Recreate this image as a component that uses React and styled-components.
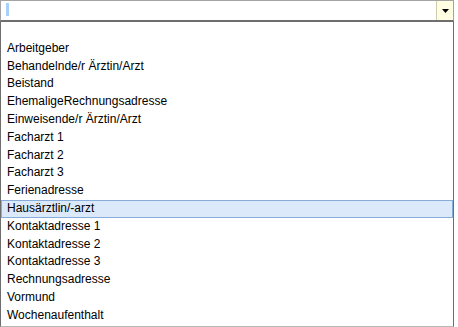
import styled, { createGlobalStyle } from "styled-components";

const GlobalStyle = createGlobalStyle`
  body {
    margin: 0;
    background: #ffffff;
    font-family: "Liberation Sans", Arial, sans-serif;
  }
`;

const Combo = styled.div`
  width: 454px;
  display: flex;
  flex-direction: column;
`;

const Field = styled.div`
  height: 19px;
  display: flex;
  border: 1px solid #a3a3a3;
  border-bottom-color: #6e6e6e;
`;

const Input = styled.div`
  flex: 1;
  position: relative;
`;

const Caret = styled.span`
  position: absolute;
  left: 5px;
  top: 2px;
  width: 3px;
  height: 13px;
  background: #a9d0f7;
`;

const DropButton = styled.div`
  width: 16px;
  display: flex;
  align-items: center;
  justify-content: center;
  background: #fffde2;
  border-left: 1px solid #cfcdb0;
`;

const List = styled.ul`
  list-style: none;
  margin: 0;
  padding: 0 0 1px 0;
  border: 1px solid #6e6e6e;
  border-bottom-color: #b8b8b8;
  font-size: 12px;
  color: #000000;
`;

const Item = styled.li`
  padding: 1px 5px;
  border: 1px solid ${({ $active }) => ($active ? "#86acdc" : "transparent")};
  background: ${({ $active }) => ($active ? "#dce9fb" : "transparent")};
  line-height: 13.8px;
  height: 13.8px;
  white-space: nowrap;
`;

const options = [
  "",
  "Arbeitgeber",
  "Behandelnde/r Ärztin/Arzt",
  "Beistand",
  "EhemaligeRechnungsadresse",
  "Einweisende/r Ärztin/Arzt",
  "Facharzt 1",
  "Facharzt 2",
  "Facharzt 3",
  "Ferienadresse",
  "Hausärztlin/-arzt",
  "Kontaktadresse 1",
  "Kontaktadresse 2",
  "Kontaktadresse 3",
  "Rechnungsadresse",
  "Vormund",
  "Wochenaufenthalt",
];

const App = () => {
  return (
    <>
      <GlobalStyle />
      <Combo>
        <Field>
          <Input>
            <Caret />
          </Input>
          <DropButton>
            <svg width="7" height="4" viewBox="0 0 7 4">
              <path d="M0 0h7L3.5 4z" fill="#000" />
            </svg>
          </DropButton>
        </Field>
        <List>
          {options.map((o, i) => (
            <Item key={i} $active={o === "Hausärztlin/-arzt"}>
              {o}
            </Item>
          ))}
        </List>
      </Combo>
    </>
  );
};

export default App;
